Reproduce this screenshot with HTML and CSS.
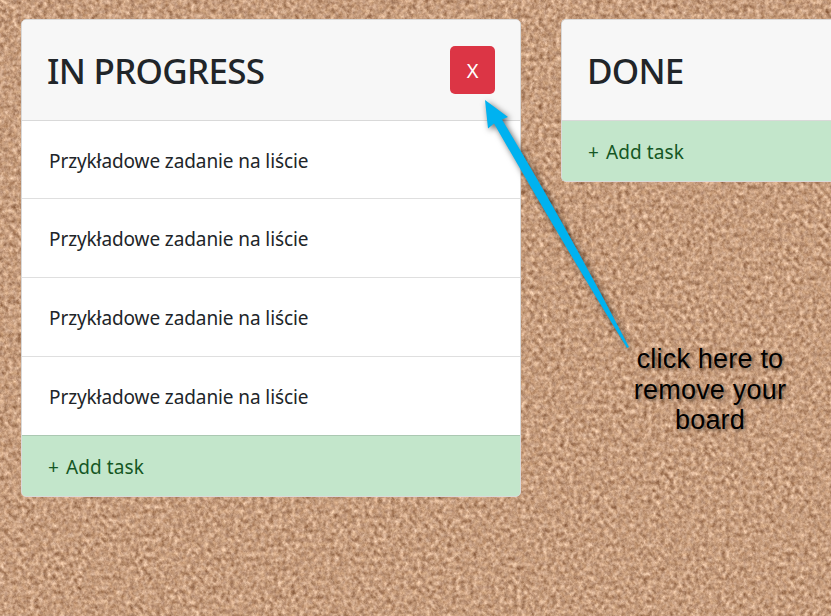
FILE: index.html
```html
<!DOCTYPE html>
<html lang="pl">
<head>
<meta charset="utf-8">
<title>Board</title>
<link rel="stylesheet" href="styles.css">
</head>
<body>
<svg class="cork" width="831" height="616" aria-hidden="true">
  <filter id="cork" x="0" y="0" width="100%" height="100%" color-interpolation-filters="sRGB">
    <feTurbulence type="fractalNoise" baseFrequency="0.23 0.21" numOctaves="4" seed="37"/>
    <feColorMatrix values="0.4 0.3 0.1 0 0.375  0.4 0.34 0.13 0 0.178  0.36 0.38 0.13 0 0.055  0 0 0 0 1"/>
  </filter>
  <rect width="831" height="616" filter="url(#cork)"/>
</svg>
<main class="boards">
  <section class="board">
    <header class="board-header"><h2 class="title title-progress">IN PROGRESS</h2><button class="remove">X</button></header>
    <ul class="tasks">
      <li class="task task-first"><span>Przykładowe zadanie na liście</span></li>
      <li class="task"><span>Przykładowe zadanie na liście</span></li>
      <li class="task"><span>Przykładowe zadanie na liście</span></li>
      <li class="task task-last"><span>Przykładowe zadanie na liście</span></li>
    </ul>
    <div class="add"><span class="plus">+</span> Add task</div>
  </section>
  <section class="board board-cut">
    <header class="board-header"><h2 class="title title-done">DONE</h2></header>
    <div class="add"><span class="plus">+</span> Add task</div>
  </section>
</main>
<svg class="arrow" width="831" height="616" aria-hidden="true">
  <path d="M485 100L508 117L502 119.5Q568 229 629 347L627 348Q559 237 494 123.5L488 128.500Z" fill="#00b2f0"/>
</svg>
<p class="hint">click here to<br>remove your<br>board</p>
</body>
</html>
```
FILE: styles.css
```css
* { box-sizing: border-box; }
body {
  margin: 0;
  width: 831px;
  height: 616px;
  overflow: hidden;
  position: relative;
  background: #c99d7b;
  font-family: "Noto Sans", "Open Sans", sans-serif;
  color: #212529;
}
.cork { position: absolute; inset: 0; }
.boards {
  position: relative;
  display: flex;
  align-items: flex-start;
  gap: 40px;
  padding: 19px 0 0 21px;
}
.board {
  flex: 0 0 500px;
  background: #fff;
  background-clip: padding-box;
  border: 1px solid #d9d9d9;
  border-radius: 5px;
  overflow: hidden;
}
.board-cut {
  flex: 1 1 0;
  border-right: 0;
  border-radius: 5px 0 0 5px;
}
.board-header {
  display: flex;
  align-items: center;
  justify-content: space-between;
  height: 101px;
  padding: 0 25px 0 25px;
  background: #f7f7f7;
  border-bottom: 1px solid #d9d9d9;
}
.title {
  margin: 2px 0 0;
  font-size: 35px;
  line-height: 42px;
  font-weight: 500;
  white-space: nowrap;
}
.title-progress { letter-spacing: -0.7px; }
.title-done { letter-spacing: -0.8px; }
.remove {
  width: 45px;
  height: 48px;
  padding: 0;
  border: 0;
  border-radius: 5px;
  background: #dc3545;
  color: #fff;
  font: 20px "Noto Sans", sans-serif;
}
.tasks { margin: 0; padding: 0; list-style: none; }
.task {
  height: 79px;
  padding: 26px 27px 0;
  border-bottom: 1px solid #dfdfdf;
  font-size: 19px;
  line-height: 28px;
  letter-spacing: -0.1px;
}
.task-first { height: 78px; }
.task-last { height: 79px; border-bottom-color: #abc8b2; }
.add {
  height: 60px;
  padding: 17px 26px 0;
  background: #c3e6cb;
  color: #155724;
  font-size: 19px;
  line-height: 28px;
  letter-spacing: 0.1px;
}
.plus { margin-right: 2px; }
.arrow {
  position: absolute;
  inset: 0;
  filter: drop-shadow(2px 2px 3px rgba(0, 0, 0, .6));
}
.hint {
  position: absolute;
  left: 610px;
  top: 344px;
  width: 200px;
  margin: 0;
  text-align: center;
  font: 27px/30.5px "Liberation Sans", Arial, sans-serif;
  letter-spacing: 0.2px;
  color: #000;
  text-shadow: 2px 2px 3px rgba(0, 0, 0, .4);
}
```
